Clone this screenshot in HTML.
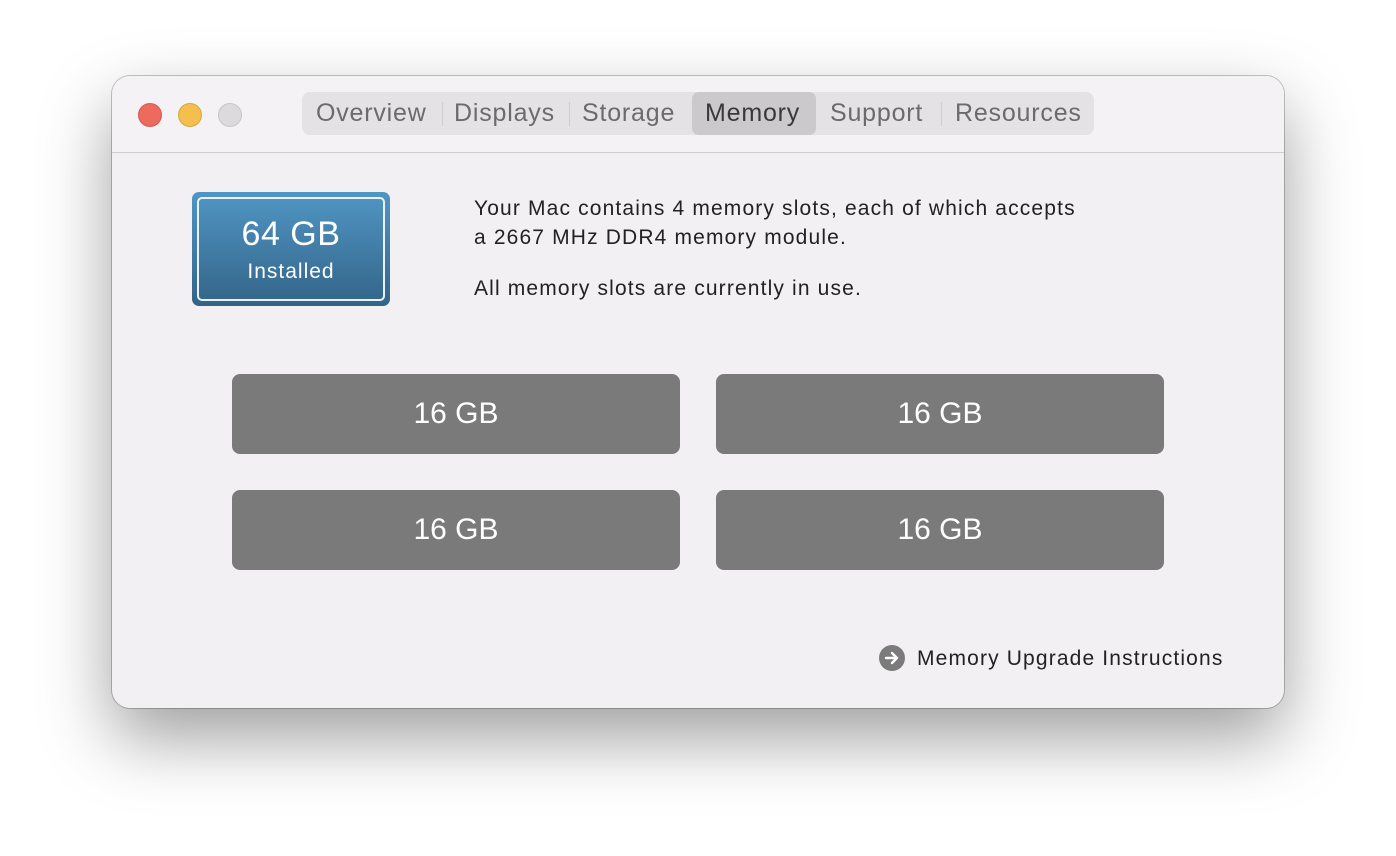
<!DOCTYPE html>
<html><head><style>
body{margin:0;width:1396px;height:856px;background:#fff;position:relative;overflow:hidden;font-family:"Liberation Sans",sans-serif;}
.win{position:absolute;left:112px;top:76px;width:1172px;height:632px;border-radius:18px;background:#f2f0f3;box-shadow:0 0 0 1px rgba(0,0,0,.22),0 30px 70px rgba(0,0,0,.38);overflow:hidden}
.title{position:absolute;left:0;top:0;width:100%;height:76px;border-bottom:1px solid #cfcdd0;background:#f4f2f5}
.dot{position:absolute;top:27px;width:23px;height:23px;border-radius:50%}
.tabs{position:absolute;left:190px;top:16px;width:792px;height:43px;background:#e4e2e5;border-radius:8px;font-size:25px;color:#6c6a6d;letter-spacing:0.8px}
.tab{position:absolute;top:0;height:43px;line-height:43px}
.sep{position:absolute;top:10px;width:1px;height:24px;background:#cfcdd0}
.sel{position:absolute;left:390px;top:0;width:124px;height:43px;background:#cbc9cc;border-radius:7px}
.badge{position:absolute;left:80px;top:116px;width:198px;height:114px;border-radius:7px;background:linear-gradient(#5096c4,#336488)}
.badge .in{position:absolute;left:5px;top:5px;right:5px;bottom:5px;border:2px solid #eaf2f8;border-radius:5px;color:#fff;text-align:center}
.txt{position:absolute;left:362px;font-size:21px;color:#222;line-height:29px;letter-spacing:1.15px}
.slot{position:absolute;width:448px;height:80px;background:#7a7a7a;border-radius:8px;color:#fff;font-size:30px;text-align:center;line-height:80px}
</style></head><body>
<div class="win">
<div class="title">
<div class="dot" style="left:26px;background:#ec6a5e;border:1px solid #d45a4f;width:22px;height:22px"></div>
<div class="dot" style="left:66px;background:#f4bf4f;border:1px solid #d8a53e;width:22px;height:22px"></div>
<div class="dot" style="left:106px;background:#dcdadd;border:1px solid #c6c4c7;width:22px;height:22px"></div>
<div class="tabs">
<div class="sel"></div>
<div class="tab" style="left:14px">Overview</div>
<div class="sep" style="left:140px"></div>
<div class="tab" style="left:152px">Displays</div>
<div class="sep" style="left:267px"></div>
<div class="tab" style="left:280px">Storage</div>
<div class="tab" style="left:403px;color:#3a383b">Memory</div>
<div class="tab" style="left:528px">Support</div>
<div class="sep" style="left:639px"></div>
<div class="tab" style="left:653px">Resources</div>
</div>
</div>
<div class="badge"><div class="in"><div style="font-size:34px;margin-top:16px;letter-spacing:0.5px">64 GB</div><div style="font-size:21px;margin-top:6px;letter-spacing:1px">Installed</div></div></div>
<div class="txt" style="top:118px">Your Mac contains 4 memory slots, each of which accepts<br>a 2667 MHz DDR4 memory module.</div>
<div class="txt" style="top:198px">All memory slots are currently in use.</div>
<div class="slot" style="left:120px;top:298px">16 GB</div>
<div class="slot" style="left:604px;top:298px">16 GB</div>
<div class="slot" style="left:120px;top:414px">16 GB</div>
<div class="slot" style="left:604px;top:414px">16 GB</div>
<svg style="position:absolute;left:767px;top:569px" width="26" height="26" viewBox="0 0 26 26"><circle cx="13" cy="13" r="13" fill="#7b7b7b"/><path d="M7 13h11M13 8l5 5-5 5" stroke="#fff" stroke-width="2.4" fill="none" stroke-linecap="round" stroke-linejoin="round"/></svg>
<div class="txt" style="left:805px;top:568px">Memory Upgrade Instructions</div>
</div>
</body></html>
